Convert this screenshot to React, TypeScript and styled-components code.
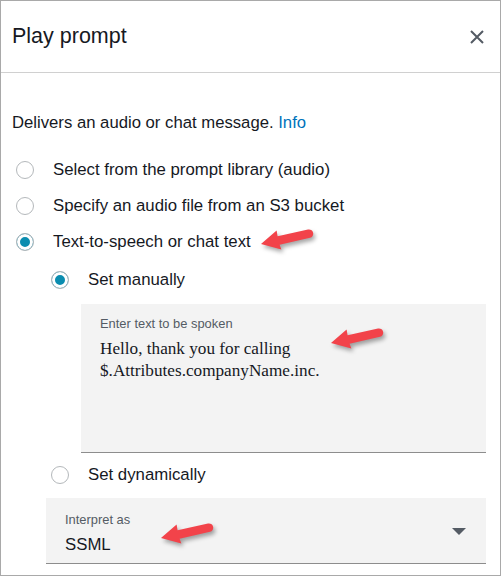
import styled, { createGlobalStyle } from "styled-components";

const GlobalStyle = createGlobalStyle`
  html, body {
    margin: 0;
    padding: 0;
    background: #ffffff;
  }
  body {
    font-family: "Liberation Sans", Arial, sans-serif;
    color: #16191f;
  }
`;

const Panel = styled.div`
  position: relative;
  width: 501px;
  height: 576px;
  box-sizing: border-box;
  border: 1px solid #a9a9a9;
  background: #fff;
  overflow: hidden;
`;

const Header = styled.div`
  display: flex;
  align-items: center;
  justify-content: space-between;
  height: 71px;
  padding: 0 13px 0 11px;
  border-bottom: 1px solid #d0d0d0;
`;

const Title = styled.div`
  font-size: 21.5px;
  color: #16191f;
  padding-bottom: 1px;
`;

const CloseButton = styled.button`
  display: flex;
  align-items: center;
  justify-content: center;
  width: 20px;
  height: 20px;
  padding: 0;
  border: none;
  background: none;
  cursor: pointer;
`;

const Body = styled.div`
  padding: 40px 14px 0 11px;
`;

const Description = styled.p`
  margin: 0;
  font-size: 16.7px;
  line-height: 20px;
`;

const InfoLink = styled.a`
  color: #0073bb;
  text-decoration: none;
`;

const Options = styled.div`
  display: flex;
  flex-direction: column;
  margin-top: 19px;
`;

const RadioRow = styled.label<{ $indent?: number; $top?: number }>`
  display: flex;
  align-items: center;
  gap: 19px;
  height: 36px;
  margin-left: ${(p) => p.$indent ?? 4}px;
  margin-top: ${(p) => p.$top ?? 0}px;
  font-size: 16.8px;
  cursor: pointer;
`;

const RadioDot = styled.span<{ $checked?: boolean }>`
  flex: none;
  width: 18px;
  height: 18px;
  box-sizing: border-box;
  border-radius: 50%;
  border: 1px solid #b4b8bb;
  background: ${(p) => (p.$checked ? "#0a8db0" : "#fff")};
  box-shadow: ${(p) => (p.$checked ? "inset 0 0 0 3px #fff" : "none")};
`;

const TextField = styled.div`
  margin: 6px 0 0 69px;
  height: 148px;
  box-sizing: content-box;
  background: #f3f3f3;
  border-bottom: 1px solid #8d8d8d;
  padding: 0 19px;
`;

const FieldLabel = styled.div<{ $top?: number }>`
  font-size: 12.9px;
  color: #545b64;
  line-height: 14px;
  padding-top: ${(p) => p.$top ?? 0}px;
`;

const SpokenText = styled.div`
  font-family: "Liberation Serif", "Times New Roman", serif;
  font-size: 17.2px;
  line-height: 22px;
  color: #16191f;
  margin-top: 7px;
`;

const SelectField = styled.div`
  display: flex;
  align-items: center;
  justify-content: space-between;
  margin: 5px 0 0 34px;
  height: 65px;
  background: #f3f3f3;
  border-bottom: 1px solid #8d8d8d;
  padding: 0 20px 0 19px;
`;

const SelectText = styled.div`
  align-self: flex-start;
  padding-top: 15px;
`;

const SelectValue = styled.div`
  font-size: 16.8px;
  line-height: 19px;
  margin-top: 8px;
`;

const Caret = styled.span`
  width: 0;
  height: 0;
  border-left: 7px solid transparent;
  border-right: 7px solid transparent;
  border-top: 7px solid #545b64;
  margin-top: 2px;
`;

const ArrowMark = styled.svg<{ $x: number; $y: number }>`
  position: absolute;
  left: ${(p) => p.$x - 3}px;
  top: ${(p) => p.$y - 22}px;
  width: 62px;
  height: 34px;
  overflow: visible;
  filter: drop-shadow(2px 3px 2px rgba(0, 0, 0, 0.35));
  pointer-events: none;
`;

function Arrow({ x, y }: { x: number; y: number }) {
  return (
    <ArrowMark $x={x} $y={y} viewBox="0 0 62 34">
      <path d="M3 22 L18.6 8.4 L19.6 14.2 L50 7.6 A4.2 4.2 0 0 1 52 15.8 L21.6 22.8 L23.4 27.6 Z" fill="#f2434a" />
    </ArrowMark>
  );
}

function CloseIcon() {
  return (
    <svg width="16" height="16" viewBox="0 0 16 16">
      <path d="M2 2 L14 14 M14 2 L2 14" stroke="#545b64" strokeWidth="2" fill="none" />
    </svg>
  );
}

export default function App() {
  return (
    <>
      <GlobalStyle />
      <Panel>
        <Header>
          <Title>Play prompt</Title>
          <CloseButton aria-label="Close">
            <CloseIcon />
          </CloseButton>
        </Header>
        <Body>
          <Description>
            Delivers an audio or chat message. <InfoLink href="#">Info</InfoLink>
          </Description>
          <Options>
            <RadioRow>
              <RadioDot />
              Select from the prompt library (audio)
            </RadioRow>
            <RadioRow>
              <RadioDot />
              Specify an audio file from an S3 bucket
            </RadioRow>
            <RadioRow>
              <RadioDot $checked />
              Text-to-speech or chat text
            </RadioRow>
            <RadioRow $indent={39} $top={2}>
              <RadioDot $checked />
              Set manually
            </RadioRow>
            <TextField>
              <FieldLabel $top={13}>Enter text to be spoken</FieldLabel>
              <SpokenText>
                Hello, thank you for calling
                <br />
                $.Attributes.companyName.inc.
              </SpokenText>
            </TextField>
            <RadioRow $indent={39} $top={4}>
              <RadioDot />
              Set dynamically
            </RadioRow>
            <SelectField>
              <SelectText>
                <FieldLabel>Interpret as</FieldLabel>
                <SelectValue>SSML</SelectValue>
              </SelectText>
              <Caret />
            </SelectField>
          </Options>
        </Body>
        <Arrow x={260} y={243} />
        <Arrow x={330} y={342} />
        <Arrow x={160} y={537} />
      </Panel>
    </>
  );
}
